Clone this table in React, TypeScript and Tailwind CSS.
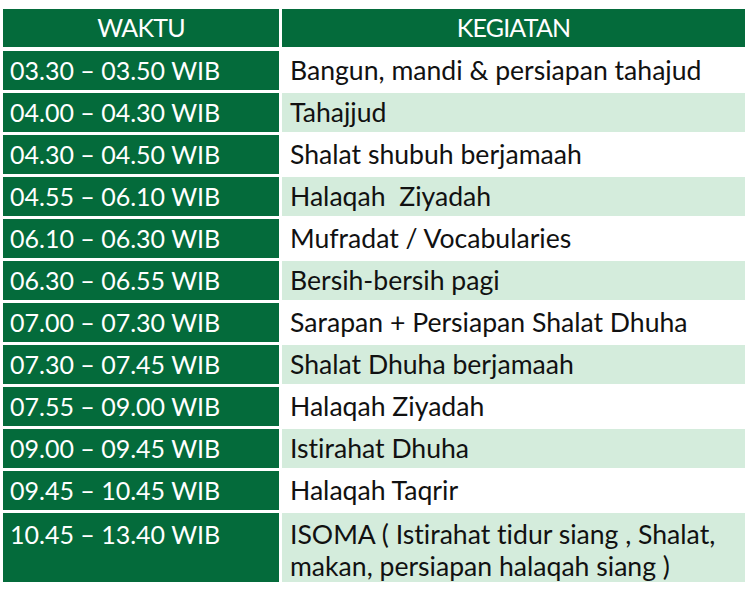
const rows: [string, string][] = [
  ["03.30 – 03.50 WIB", "Bangun, mandi & persiapan tahajud"],
  ["04.00 – 04.30 WIB", "Tahajjud"],
  ["04.30 – 04.50 WIB", "Shalat shubuh berjamaah"],
  ["04.55 – 06.10 WIB", "Halaqah  Ziyadah"],
  ["06.10 – 06.30 WIB", "Mufradat / Vocabularies"],
  ["06.30 – 06.55 WIB", "Bersih-bersih pagi"],
  ["07.00 – 07.30 WIB", "Sarapan + Persiapan Shalat Dhuha"],
  ["07.30 – 07.45 WIB", "Shalat Dhuha berjamaah"],
  ["07.55 – 09.00 WIB", "Halaqah Ziyadah"],
  ["09.00 – 09.45 WIB", "Istirahat Dhuha"],
  ["09.45 – 10.45 WIB", "Halaqah Taqrir"],
];

export default function App() {
  return (
    <div
      className="w-[750px] h-[602px] bg-white pt-[9px] pl-[3px] [font-variant-ligatures:none]"
      style={{ fontFamily: "Lato, 'Open Sans', sans-serif" }}
    >
      <div className="w-[742px] grid grid-cols-[276px_1fr] gap-x-[3px] gap-y-[3px]">
        <div className="h-[38px] mb-[1px] bg-[#046b3b] text-white text-[25px] flex items-center justify-center tracking-[-0.8px]">
          WAKTU
        </div>
        <div className="h-[38px] mb-[1px] bg-[#046b3b] text-white text-[25px] flex items-center justify-center tracking-[-0.8px]">
          KEGIATAN
        </div>
        {rows.map(([time, act], i) => (
          <Row key={time} time={time} act={act} shaded={i % 2 === 1} />
        ))}
        <div className="h-[69px] bg-[#046b3b] text-white text-[25px] leading-[32px] pl-[7px] pt-[5px]">
          10.45 – 13.40 WIB
        </div>
        <div className="h-[69px] bg-[#d4ecdc] text-[#111] text-[26.6px] leading-[32px] pl-[8px] pt-[5px] whitespace-pre">
          {"ISOMA ( Istirahat tidur siang , Shalat,\nmakan, persiapan halaqah siang )"}
        </div>
      </div>
    </div>
  );
}

function Row({ time, act, shaded }: { time: string; act: string; shaded: boolean }) {
  return (
    <>
      <div className="h-[39px] bg-[#046b3b] text-white text-[25px] flex items-center pl-[7px]">
        {time}
      </div>
      <div
        className={`h-[39px] text-[#111] text-[26.6px] flex items-center pl-[8px] whitespace-pre ${
          shaded ? "bg-[#d4ecdc]" : "bg-white"
        }`}
      >
        {act}
      </div>
    </>
  );
}
